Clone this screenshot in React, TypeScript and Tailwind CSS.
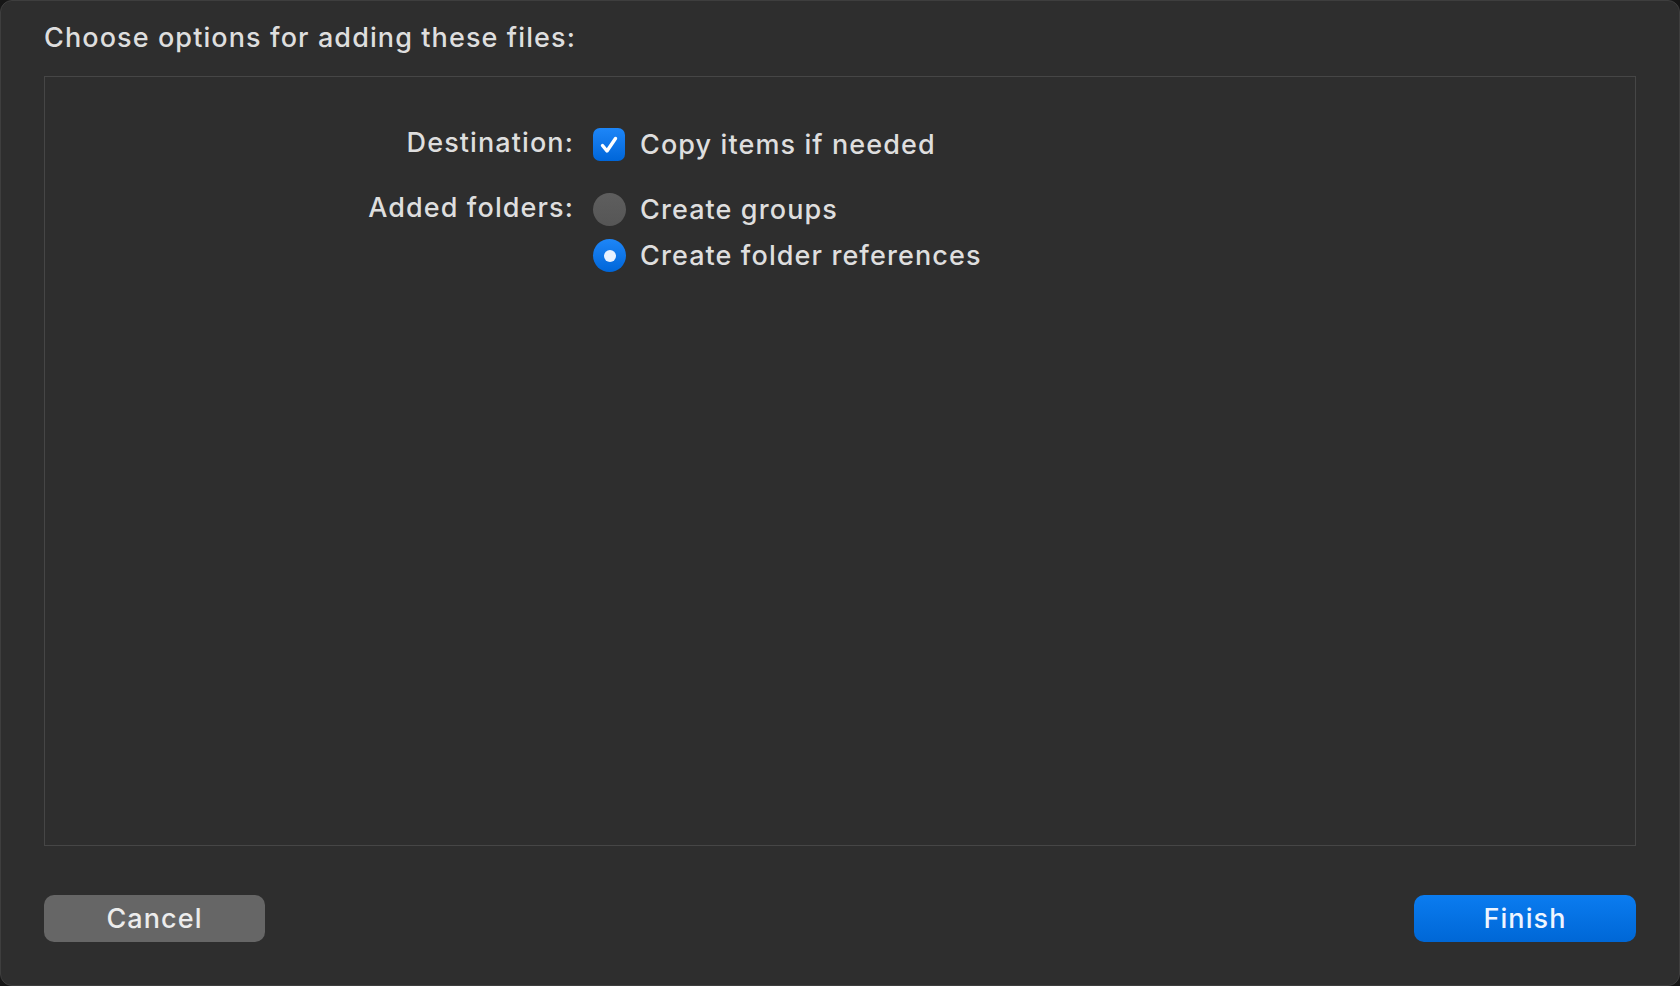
import { useState } from 'react';

const font = { fontFamily: 'Inter, "Noto Sans", sans-serif' };

function Checkbox({ checked, onClick }: { checked: boolean; onClick: () => void }) {
  return (
    <button
      onClick={onClick}
      className={
        'flex h-[33px] w-[32px] items-center justify-center rounded-[7px] ' +
        (checked ? 'bg-gradient-to-b from-[#1d86f8] to-[#0066d9]' : 'bg-[#5b5b5b]')
      }
    >
      {checked && (
        <svg width="22" height="22" viewBox="0 0 22 22" fill="none">
          <path d="M4.5 11.5 L9 17 L17.5 4.5" stroke="white" strokeWidth="3.4" strokeLinecap="round" strokeLinejoin="round" />
        </svg>
      )}
    </button>
  );
}

function Radio({ checked, onClick }: { checked: boolean; onClick: () => void }) {
  return (
    <button
      onClick={onClick}
      className={
        'flex h-[33px] w-[33px] items-center justify-center rounded-full ' +
        (checked ? 'bg-gradient-to-b from-[#1d86f8] to-[#0066d9]' : 'bg-gradient-to-b from-[#5e5e5e] to-[#565656]')
      }
    >
      {checked && <span className="h-[12px] w-[12px] rounded-full bg-[#e8f1ff]" />}
    </button>
  );
}

export default function App() {
  const [copy, setCopy] = useState(true);
  const [mode, setMode] = useState<'groups' | 'refs'>('refs');

  return (
    <div className="flex h-screen flex-col bg-[#161616]" style={font}>
      <div className="flex flex-1 flex-col rounded-[12px] border border-[#3e3e3e] bg-[#2e2e2e] px-[43px] text-[27px] font-medium leading-[33px] tracking-[1.1px] text-[#dedede]">
        <div className="pt-[20px] leading-[34px]">Choose options for adding these files:</div>

        <div className="mt-[21px] flex h-[770px] flex-col border border-[#464646] pt-[51px]">
          <div className="flex items-center">
            <div className="w-[529px] -translate-y-[2px] text-right">Destination:</div>
            <div className="ml-[19px] flex items-center gap-[15px]">
              <Checkbox checked={copy} onClick={() => setCopy(!copy)} />
              <span>Copy items if needed</span>
            </div>
          </div>

          <div className="mt-[32px] flex items-center">
            <div className="w-[529px] -translate-y-[2px] text-right">Added folders:</div>
            <div className="ml-[19px] flex items-center gap-[14px]">
              <Radio checked={mode === 'groups'} onClick={() => setMode('groups')} />
              <span>Create groups</span>
            </div>
          </div>

          <div className="mt-[13px] flex items-center">
            <div className="w-[529px]" />
            <div className="ml-[19px] flex items-center gap-[14px]">
              <Radio checked={mode === 'refs'} onClick={() => setMode('refs')} />
              <span>Create folder references</span>
            </div>
          </div>
        </div>

        <div className="mt-[49px] flex justify-between">
          <button className="h-[47px] w-[221px] rounded-[10px] bg-[#666666] text-[#ececec]">
            Cancel
          </button>
          <button className="h-[47px] w-[222px] rounded-[10px] bg-gradient-to-b from-[#0b7cf0] to-[#0067d6] text-[#eef5ff]">
            Finish
          </button>
        </div>
      </div>
      <div className="h-[10px] bg-white" />
    </div>
  );
}
